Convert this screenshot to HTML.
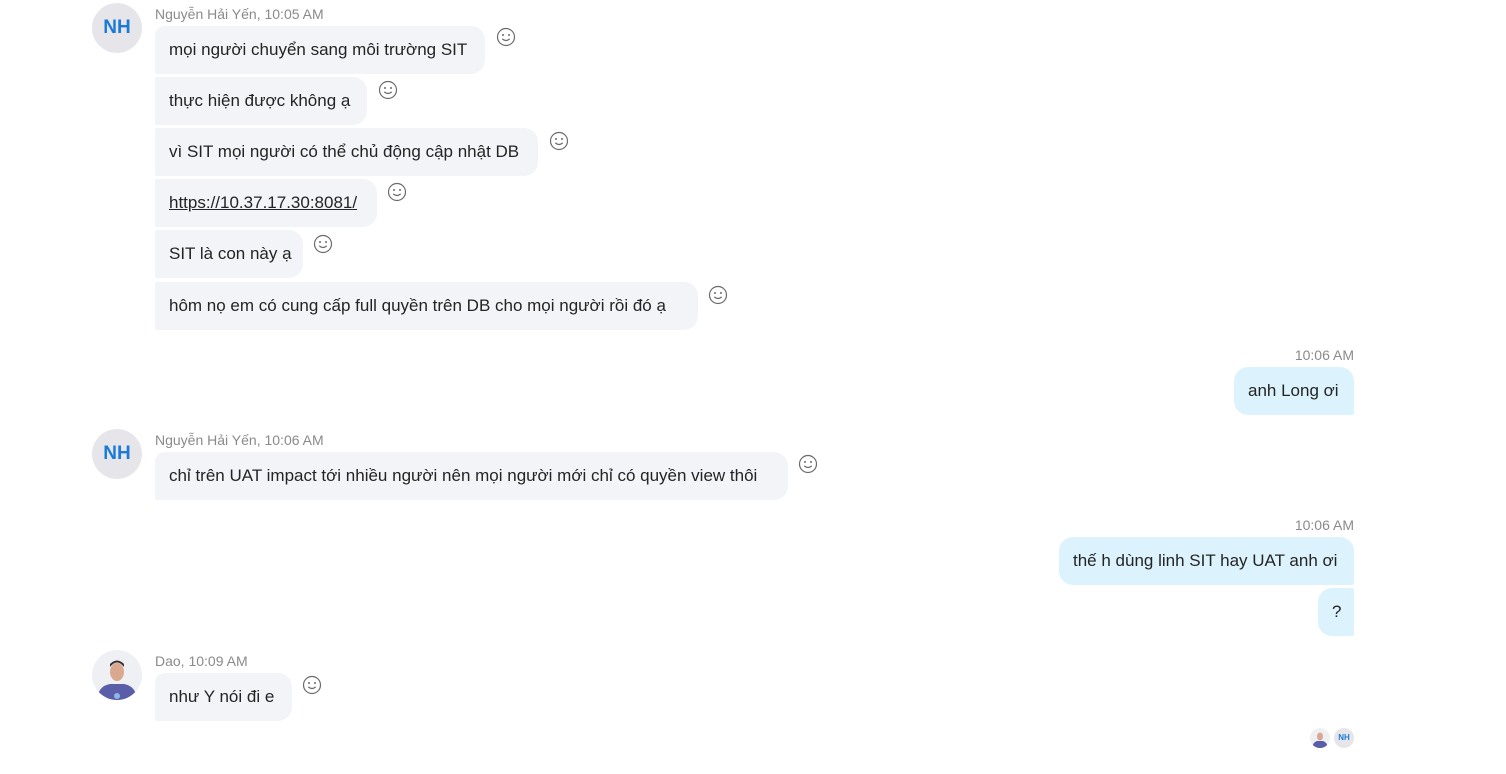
<!DOCTYPE html>
<html><head><meta charset="utf-8"><style>
body{margin:0;width:1506px;height:774px;background:#fff;position:relative;overflow:hidden;font-family:"Liberation Sans","DejaVu Sans",sans-serif;}
.a{position:absolute}
.b{position:absolute;height:48px;line-height:48px;padding:0 14px;font-size:17px;color:#242424;box-sizing:border-box;white-space:nowrap}
.l{left:155px;background:#f2f4f7;border-radius:2px 14px 14px 2px}
.r{background:#dcf3fd;border-radius:14px 14px 2px 14px}
.n{position:absolute;left:155px;font-size:14px;color:#8a8a8a}
.t{position:absolute;font-size:14px;color:#8a8a8a;right:152px}
.av{position:absolute;left:92px;width:50px;height:50px;border-radius:50%;background:#e6e6ea;color:#1a7ad8;font-weight:bold;font-size:19px;text-align:center;line-height:50px}
.s{position:absolute;width:20px;height:20px}
</style></head><body>
<svg width="0" height="0" style="position:absolute"><defs><g id="sm"><circle cx="10" cy="10" r="8.5" fill="none" stroke="#6b6b6b" stroke-width="1.2"/><circle cx="7" cy="8" r="1" fill="#6b6b6b"/><circle cx="13" cy="8" r="1" fill="#6b6b6b"/><path d="M6.3 11.8 Q10 15.2 13.7 11.8" fill="none" stroke="#6b6b6b" stroke-width="1.2"/></g></defs></svg>

<div class="av" style="top:3px">NH</div>
<div class="n" style="top:6px">Nguyễn Hải Yến, 10:05 AM</div>
<div class="b l" style="top:26px;width:330px;border-top-left-radius:10px">mọi người chuyển sang môi trường SIT</div>
<svg class="s" style="left:496px;top:27px"><use href="#sm"/></svg>
<div class="b l" style="top:77px;width:212px">thực hiện được không ạ</div>
<svg class="s" style="left:378px;top:80px"><use href="#sm"/></svg>
<div class="b l" style="top:128px;width:383px">vì SIT mọi người có thể chủ động cập nhật DB</div>
<svg class="s" style="left:549px;top:131px"><use href="#sm"/></svg>
<div class="b l" style="top:179px;width:222px;text-decoration:underline">https://10.37.17.30:8081/</div>
<svg class="s" style="left:387px;top:182px"><use href="#sm"/></svg>
<div class="b l" style="top:230px;width:148px">SIT là con này ạ</div>
<svg class="s" style="left:313px;top:234px"><use href="#sm"/></svg>
<div class="b l" style="top:282px;width:543px">hôm nọ em có cung cấp full quyền trên DB cho mọi người rồi đó ạ</div>
<svg class="s" style="left:708px;top:285px"><use href="#sm"/></svg>

<div class="t" style="top:347px">10:06 AM</div>
<div class="b r" style="top:367px;left:1234px;width:120px">anh Long ơi</div>

<div class="av" style="top:429px">NH</div>
<div class="n" style="top:432px">Nguyễn Hải Yến, 10:06 AM</div>
<div class="b l" style="top:452px;width:633px;border-top-left-radius:10px">chỉ trên UAT impact tới nhiều người nên mọi người mới chỉ có quyền view thôi</div>
<svg class="s" style="left:798px;top:454px"><use href="#sm"/></svg>

<div class="t" style="top:517px">10:06 AM</div>
<div class="b r" style="top:537px;left:1059px;width:295px">thế h dùng linh SIT hay UAT anh ơi</div>
<div class="b r" style="top:588px;left:1318px;width:36px;border-radius:14px 2px 2px 14px">?</div>

<svg class="a" style="left:92px;top:650px" width="50" height="50"><defs><clipPath id="c"><circle cx="25" cy="25" r="25"/></clipPath></defs><g clip-path="url(#c)"><rect width="50" height="50" fill="#eef0f3"/><path d="M5 50 Q6 36 18 34 L32 34 Q44 36 45 50Z" fill="#5a5ea8"/><ellipse cx="25" cy="22" rx="7" ry="9" fill="#d9a88f"/><path d="M18 17 Q25 8 32 17 L32 14 Q25 7 18 14Z" fill="#3a3030"/><circle cx="25" cy="46" r="3" fill="#8fb6e6"/></g></svg>
<div class="n" style="top:653px">Dao, 10:09 AM</div>
<div class="b l" style="top:673px;width:137px;border-top-left-radius:10px">như Y nói đi e</div>
<svg class="s" style="left:302px;top:675px"><use href="#sm"/></svg>

<svg class="a" style="left:1310px;top:728px" width="20" height="20"><defs><clipPath id="c2"><circle cx="10" cy="10" r="10"/></clipPath></defs><g clip-path="url(#c2)"><rect width="20" height="20" fill="#eef0f3"/><path d="M2 20 Q3 14 7 13 L13 13 Q17 14 18 20Z" fill="#5a5ea8"/><ellipse cx="10" cy="8.5" rx="3" ry="4" fill="#d9a88f"/></g></svg>
<div class="a" style="left:1334px;top:728px;width:20px;height:20px;border-radius:50%;background:#e6e6ea;color:#1a7ad8;font-weight:bold;font-size:8px;text-align:center;line-height:20px">NH</div>
</body></html>
